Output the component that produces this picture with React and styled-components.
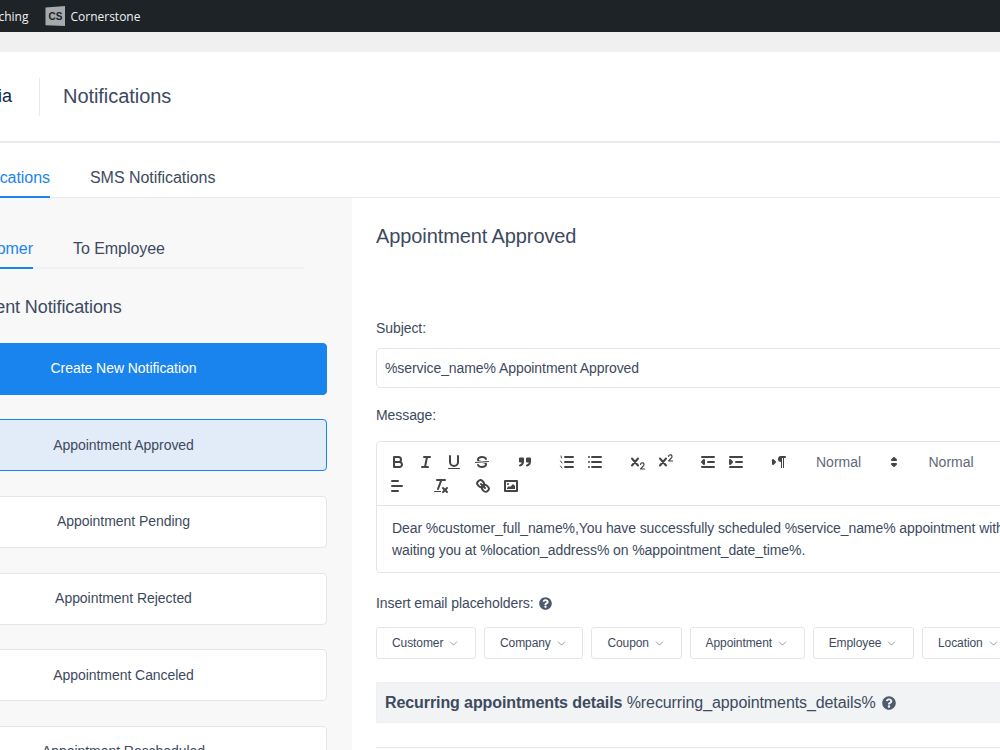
import styled, { createGlobalStyle } from 'styled-components';
import { ChevronDown } from 'lucide-react';
import { FaQuestionCircle } from 'react-icons/fa';

const GlobalStyle = createGlobalStyle`
  html, body {
    margin: 0;
    padding: 0;
    overflow: hidden;
    background: #f0f0f1;
    font-family: "Liberation Sans", Arial, sans-serif;
  }
  * { box-sizing: border-box; }
`;

const Viewport = styled.div`
  width: 1000px;
  height: 750px;
  overflow: hidden;
`;

// the page was scrolled sideways in the screenshot
const Page = styled.div`
  width: 1600px;
  margin-left: -105px;
`;

const AdminBar = styled.div`
  display: flex;
  align-items: center;
  height: 32px;
  padding-left: 82px;
  background: #1d2327;
  color: #f0f0f1;
  font-family: "Open Sans", sans-serif;
  font-size: 12px;
`;

const AdminItem = styled.span`
  display: flex;
  align-items: center;
  gap: 5px;
  margin-right: 17px;
`;

const CsLogo = styled.span`
  display: flex;
  align-items: center;
  justify-content: center;
  width: 20px;
  height: 20px;
  background: #a7aaad;
  clip-path: polygon(0 8%, 100% 0, 100% 100%, 0 96%);
  color: #1d2327;
  font-family: "Liberation Sans", sans-serif;
  font-size: 10px;
  font-weight: 700;
`;

const Gap = styled.div`
  height: 20px;
  background: #f0f0f1;
`;

const Header = styled.header`
  display: flex;
  align-items: center;
  height: 91px;
  padding-left: 52px;
  background: #fff;
  border-bottom: 2px solid #e8eaef;
`;

const Brand = styled.span`
  width: 65px;
  color: #16264a;
  font-size: 18px;
  text-align: right;
`;

const HeaderRule = styled.span`
  width: 1px;
  height: 38px;
  margin: 0 23px 0 27px;
  background: #e8eaef;
`;

const PageTitle = styled.h1`
  margin: 0;
  color: #3d4a5e;
  font-size: 20px;
  font-weight: 400;
  letter-spacing: -0.05px;
`;

const MainTabs = styled.nav`
  display: flex;
  gap: 40px;
  height: 55px;
  background: #fff;
  border-bottom: 1px solid #e8eaef;
`;

const TabItem = styled.span`
  display: flex;
  align-items: center;
  justify-content: ${(p) => (p.$alignEnd ? 'flex-end' : 'center')};
  width: ${(p) => p.$width || 'auto'};
  height: ${(p) => p.$height || '55px'};
  padding-top: ${(p) => p.$top || '16px'};
  color: ${(p) => (p.$active ? '#1a84ee' : '#3d4a5e')};
  font-size: 16px;
  letter-spacing: -0.05px;
  white-space: nowrap;
  border-bottom: 2px solid ${(p) => (p.$active ? '#1a84ee' : 'transparent')};
`;

const Body = styled.div`
  display: flex;
  height: 560px;
`;

const Sidebar = styled.aside`
  flex: 0 0 457px;
  padding: 30px 25px 0;
  background: #f8f8f9;
`;

const SubTabs = styled.div`
  display: flex;
  gap: 40px;
  width: 384px;
  height: 41px;
  border-bottom: 2px solid #f0f1f4;
`;

const SubTabSlot = styled.div`
  margin-bottom: -2px;
`;

const SideHeading = styled.h2`
  margin: 26px 0 23.8px;
  color: #3d4a5e;
  font-size: 18px;
  font-weight: 400;
  line-height: 24px;
  letter-spacing: -0.1px;
  white-space: nowrap;
`;

const NotificationList = styled.div`
  display: flex;
  flex-direction: column;
  gap: 24.6px;
`;

const NotificationButton = styled.div`
  display: flex;
  align-items: center;
  justify-content: center;
  flex: 0 0 52px;
  width: 407px;
  padding-bottom: ${(p) => (p.$primary ? '2px' : '1px')};
  border: 1px solid ${(p) => (p.$selected || p.$primary ? '#1a84ee' : '#e2e6ec')};
  border-radius: 4px;
  background: ${(p) => (p.$primary ? '#1a84ee' : p.$selected ? '#e2ecf8' : '#fff')};
  color: ${(p) => (p.$primary ? '#fff' : '#3d4a5e')};
  font-size: 14px;
  letter-spacing: -0.05px;
`;

const Panel = styled.section`
  flex: 1;
  padding: 26px 24px 0;
  background: #fff;
`;

const PanelTitle = styled.h2`
  margin: 0 0 70px;
  color: #3d4a5e;
  font-size: 20px;
  font-weight: 400;
  line-height: 24px;
  letter-spacing: -0.1px;
`;

const FieldLabel = styled.div`
  display: flex;
  align-items: center;
  gap: 6px;
  height: 20px;
  margin-bottom: ${(p) => p.$below || '10px'};
  color: #3d4a5e;
  font-size: 14px;
  letter-spacing: -0.08px;
`;

const TextInput = styled.div`
  display: flex;
  align-items: center;
  height: 40px;
  margin-bottom: 17px;
  padding: 0 8px;
  border: 1px solid #e2e6ec;
  border-radius: 4px;
  color: #3d4a5e;
  font-size: 14px;
  letter-spacing: -0.08px;
`;

const Editor = styled.div`
  margin: 16px 0 20px;
  border: 1px solid #e2e6ec;
  border-radius: 4px;
`;

const Toolbar = styled.div`
  padding: 8px 7px 7px;
  border-bottom: 1px solid #e2e6ec;
`;

const ToolRow = styled.div`
  display: flex;
  align-items: center;
  height: 24px;
`;

const ToolGroup = styled.span`
  display: flex;
  margin-right: 14.5px;
`;

const ToolButton = styled.span`
  display: flex;
  align-items: center;
  justify-content: center;
  width: 28px;
  height: 24px;

  svg {
    width: 18px;
    height: 18px;
    fill: none;
    stroke: #444;
    stroke-width: 2;
    stroke-linecap: round;
    stroke-linejoin: round;
  }

  svg .fill {
    fill: #444;
    stroke: none;
  }

  svg .solid {
    fill: #444;
  }
`;

const Picker = styled.span`
  display: flex;
  align-items: center;
  justify-content: space-between;
  width: 98px;
  height: 24px;
  padding: 0 2px 0 9px;
  color: #5f6877;
  font-size: 14px;

  svg {
    width: 18px;
    height: 18px;
    fill: #444;
    stroke: #444;
    stroke-width: 2;
    stroke-linejoin: round;
  }
`;

const EditorText = styled.div`
  padding: 11px 15px;
  color: #3d4a5e;
  font-size: 14px;
  line-height: 22px;
  letter-spacing: -0.09px;
  white-space: nowrap;
`;

const HelpIcon = styled(FaQuestionCircle)`
  flex: none;
  color: #4d5b6e;
  font-size: ${(p) => p.$size || '13px'};
`;

const PlaceholderRow = styled.div`
  display: flex;
  gap: 8px;
  margin: 14px 0 23px;
`;

const PlaceholderButton = styled.div`
  display: flex;
  align-items: center;
  gap: 4px;
  height: 32px;
  padding: 0 14.6px 0 15px;
  border: 1px solid #e2e6ec;
  border-radius: 3px;
  color: #3d4a5e;
  font-size: 12px;
  letter-spacing: -0.08px;
`;

const RecurringBox = styled.div`
  display: flex;
  align-items: center;
  gap: 6px;
  height: 41px;
  padding: 0 8px;
  background: #f1f3f5;
  border: 1px solid #eef0f3;
  color: #3d4a5e;
  font-size: 16px;
  letter-spacing: -0.09px;
`;

const RecurringName = styled.strong`
  font-weight: 700;
`;

const SectionRule = styled.div`
  height: 1px;
  margin-top: 24px;
  background: #e2e4e8;
`;

const notifications = [
  'Appointment Approved',
  'Appointment Pending',
  'Appointment Rejected',
  'Appointment Canceled',
  'Appointment Rescheduled',
];

const placeholders = ['Customer', 'Company', 'Coupon', 'Appointment', 'Employee', 'Location'];

const Icon = ({ children }) => (
  <ToolButton>
    <svg viewBox="0 0 18 18">{children}</svg>
  </ToolButton>
);

const Updown = () => (
  <svg viewBox="0 0 18 18">
    <polygon points="7 11 9 13 11 11 7 11" />
    <polygon points="7 7 9 5 11 7 7 7" />
  </svg>
);

const App = () => (
  <Viewport>
    <GlobalStyle />
    <Page>
      <AdminBar>
        <AdminItem>Coaching</AdminItem>
        <AdminItem>
          <CsLogo>CS</CsLogo>
          Cornerstone
        </AdminItem>
      </AdminBar>
      <Gap />
      <Header>
        <Brand>Amelia</Brand>
        <HeaderRule />
        <PageTitle>Notifications</PageTitle>
      </Header>
      <MainTabs>
        <TabItem $active $width="155px" $alignEnd>Email Notifications</TabItem>
        <TabItem>SMS Notifications</TabItem>
      </MainTabs>
      <Body>
        <Sidebar>
          <SubTabs>
            <SubTabSlot>
              <TabItem $active $height="41px" $top="2px" $width="113px" $alignEnd>To Customer</TabItem>
            </SubTabSlot>
            <SubTabSlot>
              <TabItem $height="41px" $top="2px">To Employee</TabItem>
            </SubTabSlot>
          </SubTabs>
          <SideHeading>Appointment Notifications</SideHeading>
          <NotificationList>
            <NotificationButton $primary>Create New Notification</NotificationButton>
            {notifications.map((name, i) => (
              <NotificationButton key={name} $selected={i === 0}>{name}</NotificationButton>
            ))}
          </NotificationList>
        </Sidebar>
        <Panel>
          <PanelTitle>Appointment Approved</PanelTitle>
          <FieldLabel>Subject:</FieldLabel>
          <TextInput>%service_name% Appointment Approved</TextInput>
          <FieldLabel $below="0">Message:</FieldLabel>
          <Editor>
            <Toolbar>
              <ToolRow>
                <ToolGroup>
                  <Icon>
                    <path d="M5,4H9.5A2.5,2.5,0,0,1,12,6.5v0A2.5,2.5,0,0,1,9.5,9H5V4Z" />
                    <path d="M5,9h5.5A2.5,2.5,0,0,1,13,11.5v0A2.5,2.5,0,0,1,10.5,14H5V9Z" />
                  </Icon>
                  <Icon>
                    <line x1="7" x2="13" y1="4" y2="4" />
                    <line x1="5" x2="11" y1="14" y2="14" />
                    <line x1="8" x2="10" y1="14" y2="4" />
                  </Icon>
                  <Icon>
                    <path d="M5,3V9a4,4,0,0,0,4,4H9a4,4,0,0,0,4-4V3" />
                    <rect className="fill" x="3" y="15" width="12" height="1" rx="0.5" />
                  </Icon>
                  <Icon>
                    <line x1="15.5" x2="2.5" y1="8.5" y2="9.5" strokeWidth="1" />
                    <path className="fill" d="M9,8C6.5,7.8,6,7.5,6,6.5,6,5.8,7.3,5,9,5c1.6,0,2.8.7,3,1.3a1,1,0,0,0,1.9-.6C13.4,4.1,11.4,3,9,3,6.2,3,4,4.5,4,6.5a3.2,3.2,0,0,0,.5,1.8Z" />
                    <path className="fill" d="M9,10C11.5,10.2,12,10.5,12,11.5c0,.7-1.3,1.5-3,1.5-1.6,0-2.8-.7-3-1.3a1,1,0,1,0-1.9.6C4.6,13.9,6.6,15,9,15c2.8,0,5-1.5,5-3.5a3.2,3.2,0,0,0-.5-1.8Z" />
                  </Icon>
                </ToolGroup>
                <ToolGroup>
                  <Icon>
                    <rect className="solid" x="4" y="5.5" width="3" height="3" />
                    <rect className="solid" x="11" y="5.5" width="3" height="3" />
                    <path d="M7,8.5c0,2.2-1,3.5-3,4" />
                    <path d="M14,8.5c0,2.2-1,3.5-3,4" />
                  </Icon>
                </ToolGroup>
                <ToolGroup>
                  <Icon>
                    <line x1="7" x2="15" y1="4" y2="4" />
                    <line x1="7" x2="15" y1="9" y2="9" />
                    <line x1="7" x2="15" y1="14" y2="14" />
                    <line x1="3" x2="3.5" y1="3" y2="5" strokeWidth="1" />
                    <line x1="2.5" x2="4" y1="8" y2="10" strokeWidth="1" />
                    <line x1="2.5" x2="4" y1="13" y2="15" strokeWidth="1" />
                  </Icon>
                  <Icon>
                    <line x1="6" x2="15" y1="4" y2="4" />
                    <line x1="6" x2="15" y1="9" y2="9" />
                    <line x1="6" x2="15" y1="14" y2="14" />
                    <line x1="3" x2="3" y1="4" y2="4" />
                    <line x1="3" x2="3" y1="9" y2="9" />
                    <line x1="3" x2="3" y1="14" y2="14" />
                  </Icon>
                </ToolGroup>
                <ToolGroup>
                  <Icon>
                    <path d="M3,5.5 L9,12.5 M9,5.5 L3,12.5" />
                    <path d="M11.6,11.4a1.7,1.7,0,1,1,3,1.2L11.6,16H15.6" strokeWidth="1.2" />
                  </Icon>
                  <Icon>
                    <path d="M3,5.5 L9,12.5 M9,5.5 L3,12.5" />
                    <path d="M11.6,3.4a1.7,1.7,0,1,1,3,1.2L11.6,8H15.6" strokeWidth="1.2" />
                  </Icon>
                </ToolGroup>
                <ToolGroup>
                  <Icon>
                    <line x1="3" x2="15" y1="14" y2="14" />
                    <line x1="3" x2="15" y1="4" y2="4" />
                    <line x1="9" x2="15" y1="9" y2="9" />
                    <polygon className="solid" points="5 7 5 11 3 9 5 7" />
                  </Icon>
                  <Icon>
                    <line x1="3" x2="15" y1="14" y2="14" />
                    <line x1="3" x2="15" y1="4" y2="4" />
                    <line x1="9" x2="15" y1="9" y2="9" />
                    <polygon className="solid" points="3 7 3 11 5 9 3 7" />
                  </Icon>
                </ToolGroup>
                <ToolGroup>
                  <Icon>
                    <polygon className="solid" points="3 11 5 9 3 7 3 11" />
                    <line x1="15" x2="11" y1="4" y2="4" />
                    <path className="fill" d="M11,3a3,3,0,0,0,0,6h1V3H11Z" />
                    <rect className="fill" x="11" y="4" width="1" height="11" />
                    <rect className="fill" x="13" y="4" width="1" height="11" />
                  </Icon>
                </ToolGroup>
                <ToolGroup>
                  <Picker>Normal<Updown /></Picker>
                </ToolGroup>
                <ToolGroup>
                  <Picker>Normal<Updown /></Picker>
                </ToolGroup>
              </ToolRow>
              <ToolRow>
                <ToolGroup>
                  <Icon>
                    <line x1="3" x2="13" y1="9" y2="9" />
                    <line x1="3" x2="9" y1="14" y2="14" />
                    <line x1="3" x2="9" y1="4" y2="4" />
                  </Icon>
                </ToolGroup>
                <ToolGroup>
                  <Icon>
                    <line x1="5" x2="13" y1="3" y2="3" />
                    <line x1="6" x2="9.35" y1="12" y2="3" />
                    <line x1="11" x2="15" y1="11" y2="15" />
                    <line x1="15" x2="11" y1="11" y2="15" />
                    <rect className="fill" x="2" y="14" width="7" height="1" rx="0.5" />
                  </Icon>
                </ToolGroup>
                <ToolGroup>
                  <Icon>
                    <line x1="7" x2="11" y1="7" y2="11" />
                    <path d="M8.9,4.6a3.5,3.5,0,0,1,.4,4.7A3.5,3.5,0,0,1,4.6,8.9C3.2,7.5,2,6.4,4.2,4.2S7.5,3.2,8.9,4.6Z" />
                    <path d="M13.4,9.1a3.5,3.5,0,0,0-4.7-.4,3.5,3.5,0,0,0,.4,4.7c1.4,1.4,2.5,2.5,4.7.4S14.8,10.5,13.4,9.1Z" />
                  </Icon>
                  <Icon>
                    <rect x="3" y="4" width="12" height="10" />
                    <circle className="fill" cx="6" cy="7" r="1" />
                    <polyline className="fill" points="5 12 5 11 7 9 8 10 11 7 13 9 13 12 5 12" />
                  </Icon>
                </ToolGroup>
              </ToolRow>
            </Toolbar>
            <EditorText>
              Dear %customer_full_name%,You have successfully scheduled %service_name% appointment with %employee_full_name%. We are
              <br />
              waiting you at %location_address% on %appointment_date_time%.
            </EditorText>
          </Editor>
          <FieldLabel $below="0">
            Insert email placeholders:
            <HelpIcon />
          </FieldLabel>
          <PlaceholderRow>
            {placeholders.map((name) => (
              <PlaceholderButton key={name}>
                {name}
                <ChevronDown size={13} strokeWidth={1} />
              </PlaceholderButton>
            ))}
          </PlaceholderRow>
          <RecurringBox>
            <span>
              <RecurringName>Recurring appointments details</RecurringName> %recurring_appointments_details%
            </span>
            <HelpIcon $size="14px" />
          </RecurringBox>
          <SectionRule />
        </Panel>
      </Body>
    </Page>
  </Viewport>
);

export default App;
